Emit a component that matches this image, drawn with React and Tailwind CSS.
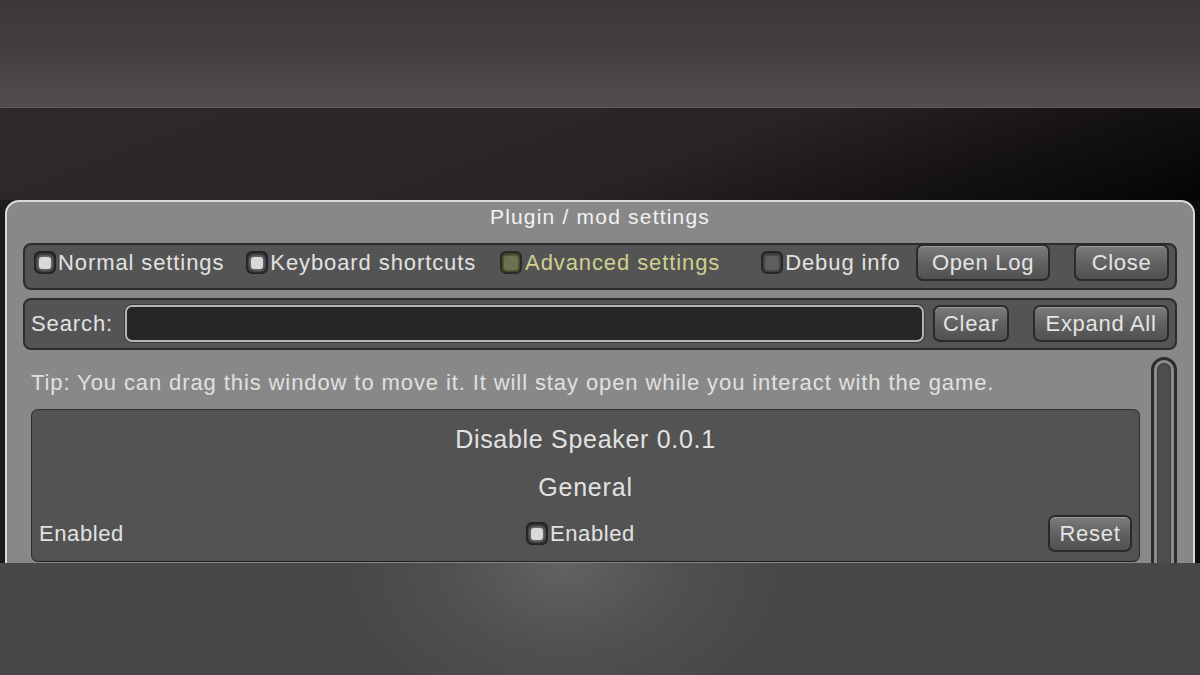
import React from 'react';

const font = { fontFamily: '"Liberation Sans", Arial, sans-serif' };

const Toggle = ({ variant = 'on' }) => {
  const outer = {
    on: 'bg-[#2e2e2e] border-[#222]',
    olive: 'bg-[#3d3f2b] border-[#2a2b1f]',
    off: 'bg-[#3a3a3a] border-[#262626]',
  }[variant];
  const inner = {
    on: 'w-[12px] h-[12px] bg-[#d9d9d9] shadow-[0_0_3px_2px_rgba(120,120,120,0.9)]',
    olive: 'w-[14px] h-[14px] bg-[#6e7150] shadow-[0_0_2px_1px_rgba(100,102,70,0.9)]',
    off: 'w-[14px] h-[14px] bg-[#5e5e5e] shadow-[0_0_2px_1px_rgba(80,80,80,0.9)]',
  }[variant];
  return (
    <div className={`w-[22px] h-[23px] shrink-0 rounded-[6px] border-2 flex items-center justify-center ${outer}`}>
      <div className={`rounded-[3px] ${inner}`} />
    </div>
  );
};

const Button = ({ children, className = '' }) => (
  <div
    className={`h-[37px] shrink-0 rounded-[7px] border-2 border-[#2a2a2a] bg-gradient-to-b from-[#7c7c7c] via-[#626262] to-[#505050] shadow-[inset_0_1px_0_#9a9a9a] flex items-center justify-center text-[22px] text-[#e4e4e4] tracking-[0.7px] ${className}`}
  >
    {children}
  </div>
);

export default function App() {
  return (
    <div className="w-[1200px] h-[675px] overflow-hidden flex flex-col bg-[#1a1a1a]" style={font}>
      {/* top backdrop */}
      <div className="h-[108px] shrink-0 bg-gradient-to-b from-[#3c3837] via-[#433f3e] to-[#514e4d] border-b border-[#5d5b5a]" />
      <div className="h-[92px] shrink-0 bg-[linear-gradient(160deg,#2f2a29_0%,#2a2524_55%,#141111_80%,#050404_100%)]" />

      {/* window, clipped at the bottom */}
      <div className="h-[363px] shrink-0 overflow-hidden px-[5px] bg-[linear-gradient(90deg,#1c1a1a,#2a2727_50%,#0d0b0b)]">
        <div className="h-[400px] rounded-t-[14px] border-2 border-[#d9d9d9] bg-[#888888] px-[16px]">
          <div className="h-[41px] pt-[3px] text-center text-[21px] leading-[24px] text-[#f2f2f2] tracking-[1.2px]">
            Plugin / mod settings
          </div>

          {/* tabs row */}
          <div className="h-[47px] pb-[8px] rounded-[8px] border-2 border-[#2c2c2c] bg-[#545454] flex items-center pl-[9px] pr-[6px] text-[22px] text-[#e2e2e2] tracking-[0.9px]">
            <Toggle />
            <span className="ml-[2px]">Normal settings</span>
            <div className="ml-[22px]"><Toggle /></div>
            <span className="ml-[2px]">Keyboard shortcuts</span>
            <div className="ml-[24px]"><Toggle variant="olive" /></div>
            <span className="ml-[3px] text-[#cfd08f]">Advanced settings</span>
            <div className="ml-[41px]"><Toggle variant="off" /></div>
            <span className="ml-[2px]">Debug info</span>
            <Button className="ml-auto w-[134px]">Open Log</Button>
            <Button className="ml-[24px] w-[95px]">Close</Button>
          </div>

          {/* search row */}
          <div className="mt-[8px] h-[52px] pb-[2px] rounded-[8px] border-2 border-[#2c2c2c] bg-[#545454] flex items-center pl-[6px] pr-[6px] text-[22px] text-[#e2e2e2] tracking-[0.9px]">
            <span>Search:</span>
            <div className="ml-[12px] flex-1 h-[37px] rounded-[7px] border-2 border-[#b5b5b5] bg-[#262626] shadow-[0_0_0_1px_#3a3a3a]" />
            <Button className="ml-[9px] w-[76px]">Clear</Button>
            <Button className="ml-[24px] w-[136px]">Expand All</Button>
          </div>

          {/* content + scrollbar */}
          <div className="flex mt-[6px]">
            <div className="flex-1 pl-[8px] pr-[11px]">
              <div className="pt-[15px] h-[53px] text-[22px] text-[#e0e0e0] tracking-[0.9px] leading-[24px]">
                Tip: You can drag this window to move it. It will stay open while you interact with the game.
              </div>
              <div className="h-[153px] rounded-[7px] border border-[#2e2e2e] border-b-[#1e1e1e] bg-[#535353] px-[7px] text-[#e2e2e2]">
                <div className="pt-[15px] h-[58px] text-center text-[25px] leading-[29px] tracking-[0.7px]">Disable Speaker 0.0.1</div>
                <div className="h-[40px] flex items-center justify-center text-[25px] tracking-[0.8px]">General</div>
                <div className="flex items-center h-[51px] text-[22px] tracking-[0.6px]">
                  <span className="w-[487px]">Enabled</span>
                  <Toggle />
                  <span className="ml-[2px]">Enabled</span>
                  <Button className="ml-auto w-[84px] h-[36px]">Reset</Button>
                </div>
              </div>
            </div>
            <div className="w-[26px] h-[220px] mt-[1px] rounded-t-full border-[3px] border-[#2c2c2c] bg-[#8c8c8c] p-[3px]">
              <div className="h-full rounded-t-full bg-[#4e4e4e] shadow-[inset_0_0_2px_#222]" />
            </div>
          </div>
        </div>
      </div>

      {/* bottom backdrop */}
      <div className="flex-1 bg-[radial-gradient(ellipse_18%_140%_at_47%_0%,#626262_0%,#505050_55%,#484848_100%)]" />
    </div>
  );
}
